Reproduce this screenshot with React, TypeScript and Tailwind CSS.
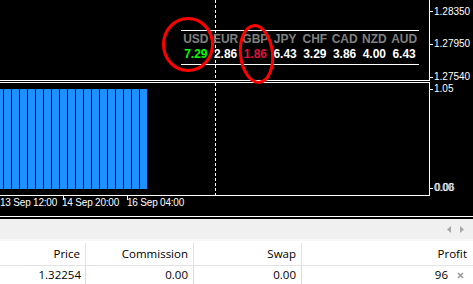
import React from "react";

const currencies = [
  { c: "USD", v: "7.29", color: "text-[#00ff00]" },
  { c: "EUR", v: "2.86", color: "text-white" },
  { c: "GBP", v: "1.86", color: "text-[#dc143c]" },
  { c: "JPY", v: "6.43", color: "text-white" },
  { c: "CHF", v: "3.29", color: "text-white" },
  { c: "CAD", v: "3.86", color: "text-white" },
  { c: "NZD", v: "4.00", color: "text-white" },
  { c: "AUD", v: "6.43", color: "text-white" },
];

const Dashed = () => (
  <div className="absolute left-[215px] top-0 bottom-0 w-px bg-[repeating-linear-gradient(to_bottom,#ffffff_0px,#ffffff_3px,transparent_3px,transparent_5px)]" />
);

export default function App() {
  const bars = Array.from({ length: 18 });
  return (
    <div
      className="relative w-[473px] h-[284px] overflow-hidden bg-[#f0f0f0] flex flex-col"
      style={{ fontFamily: '"Liberation Sans", Arial, sans-serif' }}
    >
      {/* Chart */}
      <div className="h-[216px] bg-black flex flex-col text-white shrink-0">
        {/* top window */}
        <div className="flex h-[81px]">
          <div className="relative w-[430px] border-r border-b border-white">
            <Dashed />
            <div className="absolute left-[181px] top-[30px] w-[238px] border-t border-b border-white pt-px pb-[2px]">
              <div className="grid grid-cols-8 text-[12px] font-bold leading-[15px] text-center">
                {currencies.map((x) => (
                  <div key={x.c} className="text-[#808080]">
                    {x.c}
                  </div>
                ))}
                {currencies.map((x) => (
                  <div key={x.c + "v"} className={x.color}>
                    {x.v}
                  </div>
                ))}
              </div>
            </div>
          </div>
          <div className="relative flex-1 text-[10px] leading-[12px]">
            <div className="absolute left-0 top-[11px] w-[3px] h-px bg-white" />
            <div className="absolute left-[4px] top-[6px]">1.28350</div>
            <div className="absolute left-0 top-[44px] w-[3px] h-px bg-white" />
            <div className="absolute left-[4px] top-[38px]">1.27950</div>
            <div className="absolute left-0 top-[77px] w-[3px] h-px bg-white" />
            <div className="absolute left-[4px] top-[71px]">1.27540</div>
          </div>
        </div>
        <div className="h-px" />
        {/* bottom window */}
        <div className="flex h-[114px]">
          <div className="relative w-[430px] border-t border-r border-b border-white">
            <div className="flex gap-px mt-[6px] h-[100px]">
              <div className="w-[3px] bg-[#1e90ff]" />
              {bars.map((_, i) => (
                <div key={i} className="w-[7px] bg-[#1e90ff]" />
              ))}
            </div>
            <Dashed />
          </div>
          <div className="relative flex-1 text-[10px] leading-[12px]">
            <div className="absolute left-0 top-[7px] w-[3px] h-px bg-white" />
            <div className="absolute left-[4px] top-[1px]">1.05</div>
            <div className="absolute left-0 top-[106px] w-[3px] h-px bg-white" />
            <div className="absolute left-[4px] top-[100px]">0.00</div>
            <div className="absolute left-[5px] top-[100px] text-[#e8e8ff]">0.06</div>
          </div>
        </div>
        {/* time axis */}
        <div className="relative h-[20px] text-[10px] leading-[12px] tracking-[-0.2px]">
          <div className="absolute left-[63px] top-0 w-px h-[4px] bg-white" />
          <div className="absolute left-[127px] top-0 w-px h-[4px] bg-white" />
          <div className="absolute left-0 top-[1px]">13 Sep 12:00</div>
          <div className="absolute left-[62px] top-[1px]">14 Sep 20:00</div>
          <div className="absolute left-[127px] top-[1px]">16 Sep 04:00</div>
        </div>
      </div>

      {/* separator lines */}
      <div className="h-px bg-white shrink-0" />
      <div className="h-[2px] bg-black shrink-0" />

      {/* tab strip */}
      <div className="h-[20px] bg-[#f0f0f0] flex items-center justify-end gap-[9px] pr-[9px] shrink-0">
        <svg width="4" height="7" viewBox="0 0 4 7">
          <path d="M4 0 L0 3.5 L4 7 Z" fill="#a8a8a8" />
        </svg>
        <svg width="4" height="7" viewBox="0 0 4 7">
          <path d="M0 0 L4 3.5 L0 7 Z" fill="#a8a8a8" />
        </svg>
      </div>
      <div className="h-[2px] bg-[#f7f7f7] shrink-0" />

      {/* table */}
      <div
        className="flex-1 bg-white flex flex-col text-[11.5px] text-black"
        style={{ fontFamily: '"Open Sans", "Noto Sans", sans-serif' }}
      >
        <div className="flex h-[25px] border-b border-[#e3e3e3] items-center pt-[2px]">
          <div className="w-[86px] h-full border-r border-[#e3e3e3] flex items-center justify-end pr-[5px]">Price</div>
          <div className="w-[108px] h-full border-r border-[#e3e3e3] flex items-center justify-end pr-[5px]">Commission</div>
          <div className="w-[108px] h-full border-r border-[#e3e3e3] flex items-center justify-end pr-[5px]">Swap</div>
          <div className="flex-1 h-full flex items-center justify-end pr-[6px]">Profit</div>
        </div>
        <div className="flex flex-1">
          <div className="w-[86px] border-r border-[#dcdcdc] flex items-center justify-end pr-[4px]">1.32254</div>
          <div className="w-[108px] border-r border-[#dcdcdc] flex items-center justify-end pr-[5px]">0.00</div>
          <div className="w-[108px] border-r border-[#dcdcdc] flex items-center justify-end pr-[5px]">0.00</div>
          <div className="flex-1 flex items-center justify-end pr-[9px] gap-[9px]">
            <span>96</span>
            <svg width="7" height="7" viewBox="0 0 7 7">
              <path d="M1 1 L6 6 M6 1 L1 6" stroke="#9a9a9a" strokeWidth="1.6" />
            </svg>
          </div>
        </div>
      </div>

      {/* red annotation ellipses */}
      <svg className="absolute inset-0 pointer-events-none" width="473" height="284">
        <ellipse cx="188" cy="44.5" rx="24.5" ry="26" fill="none" stroke="#ff0000" strokeWidth="3" />
        <ellipse cx="256.5" cy="54" rx="16" ry="28.5" fill="none" stroke="#ff0000" strokeWidth="3" transform="rotate(-6 256.5 54)" />
      </svg>
    </div>
  );
}
